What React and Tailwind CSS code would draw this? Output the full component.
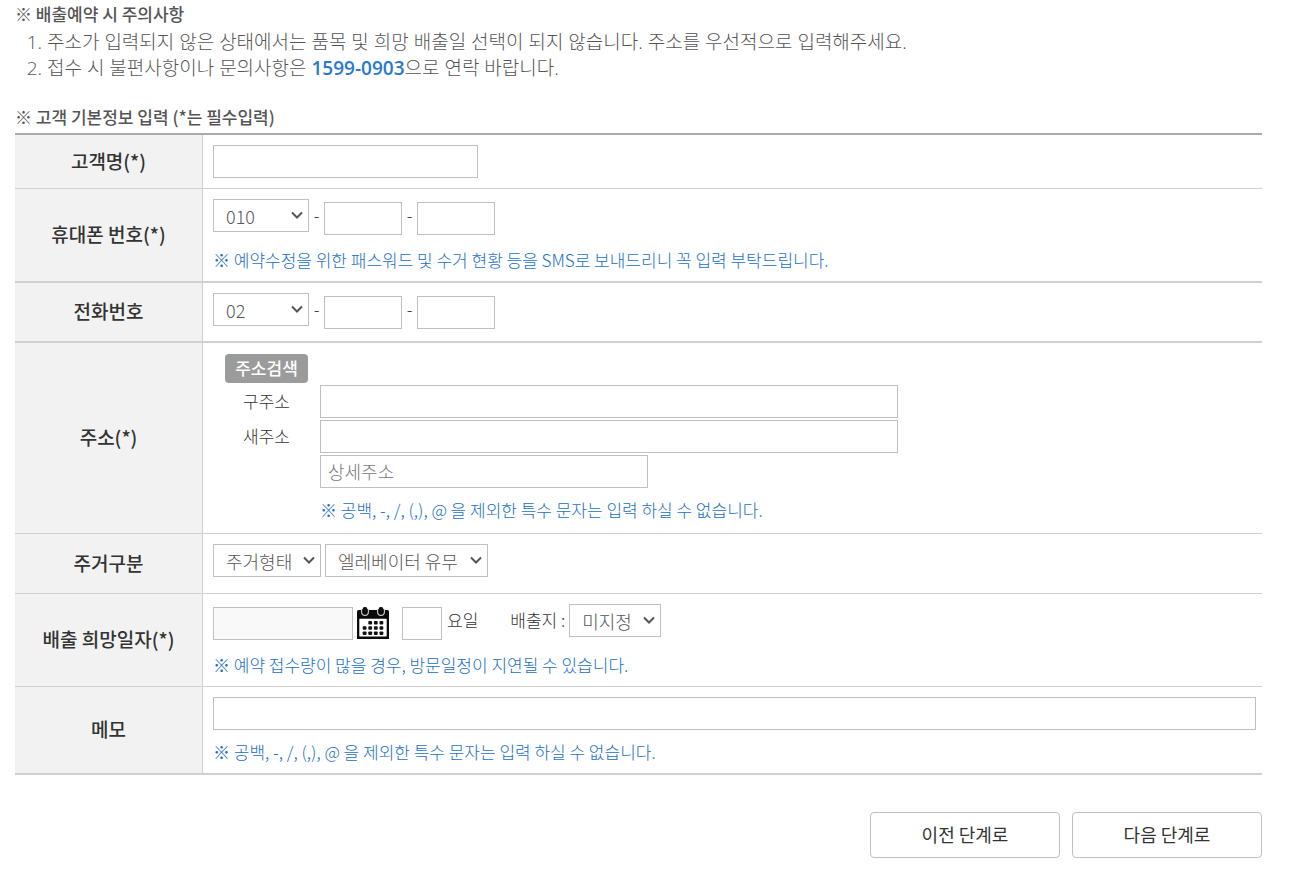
import React from "react";

const box =
  "h-[33px] min-w-0 max-w-full border border-[#bfbfbf] bg-white px-[7px] pb-[2px] text-[18px] font-light text-[#555] placeholder:text-[#777]";

function TextBox({ className = "", ...props }) {
  return <input type="text" className={`${box} ${className}`} {...props} />;
}

function Select({ className = "", options, ...props }) {
  return (
    <span className={`relative block ${className}`}>
      <select
        className="block h-[33px] w-full appearance-none border border-[#bfbfbf] bg-white pr-5 pl-3 text-[18px] leading-6 font-light text-[#555]"
        {...props}
      >
        {options.map((o) => (
          <option key={o}>{o}</option>
        ))}
      </select>
      <svg
        className="pointer-events-none absolute top-3 right-[6px]"
        width="12"
        height="9"
        viewBox="0 0 12 9"
        fill="none"
        stroke="#555"
        strokeWidth="2"
        aria-hidden="true"
      >
        <path d="M1 1.5L6 6.5L11 1.5" />
      </svg>
    </span>
  );
}

function Note({ className = "", children }) {
  return (
    <p className={`pb-[1px] text-[17px] leading-[23px] font-light text-[#1a6fc6] ${className}`}>
      {children}
    </p>
  );
}

function Row({ label, htmlFor, height = "", line = "border-b", pad = "px-[10px] pt-[10px] pb-[9px]", children }) {
  return (
    <tr className={height}>
      <th
        scope="row"
        className={`w-[188px] border-r border-[#d0d0d0] bg-[#f2f2f2] pb-[2px] text-center align-middle text-[19px] leading-6 font-medium text-[#333] ${line}`}
      >
        {htmlFor ? <label htmlFor={htmlFor}>{label}</label> : label}
      </th>
      <td className={`border-[#d0d0d0] align-top ${pad} ${line}`}>{children}</td>
    </tr>
  );
}

function PhoneFields({ id, name, codes }) {
  return (
    <div className="flex items-start">
      <Select id={id} className="w-24" options={codes} />
      <div className="flex items-start pt-[3px] text-[17px] leading-[26px] font-light text-[#333]">
        <span className="w-[15px] text-center">-</span>
        <TextBox className="w-[78px]" aria-label={`${name} 가운데 자리`} />
        <span className="w-[15px] text-center">-</span>
        <TextBox className="w-[78px]" aria-label={`${name} 끝자리`} />
      </div>
    </div>
  );
}

function CalendarIcon() {
  const dots = [];
  for (let r = 0; r < 3; r++)
    for (let c = r === 0 ? 1 : 0; c < 4; c++)
      dots.push(
        <rect key={`${r}-${c}`} x={5.7 + c * 5.6} y={14 + r * 5.2} width="3.8" height="3.5" rx="0.9" fill="#111" />
      );
  return (
    <svg width="32" height="32" viewBox="0 0 32 32" aria-hidden="true">
      <path d="M0 4.5Q0 3 1.5 3H30.5Q32 3 32 4.5V32H0Z" fill="#0b0b0d" />
      <rect x="2.3" y="11.8" width="27.4" height="17.6" rx="0.6" fill="#fff" />
      {[8, 24].map((x) => (
        <g key={x}>
          <path d={`M${x - 3.4} 2.4V4.6Q${x - 3.4} 8.4 ${x} 8.4T${x + 3.4} 4.6V2.4`} fill="#0b0b0d" stroke="#ccc" strokeWidth="1.2" />
          <rect x={x - 2.4} y="0" width="4.8" height="7.4" rx="2.2" fill="#0b0b0d" />
        </g>
      ))}
      {dots}
    </svg>
  );
}

export default function App() {
  return (
    <main className="bg-white pt-[2px] pr-[37px] pb-[14px] pl-[15px] font-['Noto_Sans_CJK_KR',sans-serif] text-[#555]">
      <h2 className="text-[17px] leading-6 font-medium">※ 배출예약 시 주의사항</h2>
      <ol className="mt-[3px] list-decimal pl-8 font-['Open_Sans','Noto_Sans_CJK_KR',sans-serif] text-[19px] leading-[26px] font-light">
        <li>
          주소가 입력되지 않은 상태에서는 품목 및 희망 배출일 선택이 되지 않습니다. 주소를 우선적으로 입력해주세요.
        </li>
        <li>
          접수 시 불편사항이나 문의사항은 <strong className="font-semibold text-[#2a78d0]">1599-0903</strong>으로 연락
          바랍니다.
        </li>
      </ol>

      <form onSubmit={(e) => e.preventDefault()}>
        <h2 className="mt-6 mb-1 text-[17px] leading-6 font-medium">※ 고객 기본정보 입력 (*는 필수입력)</h2>
        <table className="w-full border-separate border-spacing-0 border-t-2 border-[#ababab]">
          <tbody>
            <Row label="고객명(*)" htmlFor="name" height="h-[54px]">
              <TextBox id="name" className="block w-[265px]" />
            </Row>
            <Row label="휴대폰 번호(*)" htmlFor="mobile" line="border-b-2">
              <PhoneFields id="mobile" name="휴대폰 번호" codes={["010", "011", "016", "017", "018", "019"]} />
              <Note className="mt-[13px]">
                ※ 예약수정을 위한 패스워드 및 수거 현황 등을 SMS로 보내드리니 꼭 입력 부탁드립니다.
              </Note>
            </Row>
            <Row label="전화번호" htmlFor="phone" height="h-[60px]" line="border-b-2">
              <PhoneFields id="phone" name="전화번호" codes={["02", "031", "032", "051"]} />
            </Row>
            <Row label="주소(*)" pad="px-[10px] py-[11px]">
              <div className="grid grid-cols-[107px_1fr] items-center gap-y-[2px] text-[17px] leading-6 font-light text-[#333]">
                <button
                  type="button"
                  className="h-[29px] w-[83px] justify-self-center rounded bg-[#9b9b9b] pb-[2px] text-[17px] leading-6 font-medium text-white"
                >
                  주소검색
                </button>
                <span />
                <label htmlFor="old-address" className="pb-[2px] text-center">구주소</label>
                <TextBox id="old-address" className="w-[578px]" />
                <label htmlFor="new-address" className="pb-[2px] text-center">새주소</label>
                <TextBox id="new-address" className="w-[578px]" />
                <TextBox className="col-start-2 w-[328px]" placeholder="상세주소" aria-label="상세주소" />
                <Note className="col-start-2 mt-2">
                  ※ 공백, -, /, (,), @ 을 제외한 특수 문자는 입력 하실 수 없습니다.
                </Note>
              </div>
            </Row>
            <Row label="주거구분" htmlFor="housing" height="h-[60px]">
              <div className="flex gap-1">
                <Select id="housing" className="w-[108px]" options={["주거형태", "아파트", "단독주택"]} />
                <Select className="w-[163px]" options={["엘레베이터 유무", "있음", "없음"]} aria-label="엘레베이터 유무" />
              </div>
            </Row>
            <Row label="배출 희망일자(*)" htmlFor="date">
              <div className="flex items-start text-[17px] leading-[26px] font-light text-[#333]">
                <div className="flex items-start pt-[3px]">
                  <input id="date" type="text" readOnly className="h-[33px] w-[140px] border border-[#bfbfbf] bg-[#f9f9f9] px-2" />
                  <button type="button" aria-label="날짜 선택" className="ml-1 block">
                    <CalendarIcon />
                  </button>
                  <TextBox id="weekday" className="ml-[13px] w-10" />
                  <label htmlFor="weekday" className="ml-[5px]">요일</label>
                  <label htmlFor="place" className="ml-8">배출지 :</label>
                </div>
                <Select id="place" className="ml-1 w-[92px]" options={["미지정", "문앞", "주차장"]} />
              </div>
              <Note className="mt-[13px]">※ 예약 접수량이 많을 경우, 방문일정이 지연될 수 있습니다.</Note>
            </Row>
            <Row label="메모" htmlFor="memo" line="border-b-2" pad="pl-[10px] pr-[6px] pt-[10px] pb-[9px]">
              <TextBox id="memo" className="block w-full" />
              <Note className="mt-[10px]">※ 공백, -, /, (,), @ 을 제외한 특수 문자는 입력 하실 수 없습니다.</Note>
            </Row>
          </tbody>
        </table>

        <div className="mt-[37px] flex justify-end gap-3">
          <button type="button" className="h-[46px] w-[190px] rounded border border-[#bfbfbf] bg-white pb-[2px] text-[18px] text-[#333]">
            이전 단계로
          </button>
          <button type="submit" className="h-[46px] w-[190px] rounded border border-[#bfbfbf] bg-white pb-[2px] text-[18px] text-[#333]">
            다음 단계로
          </button>
        </div>
      </form>
    </main>
  );
}
